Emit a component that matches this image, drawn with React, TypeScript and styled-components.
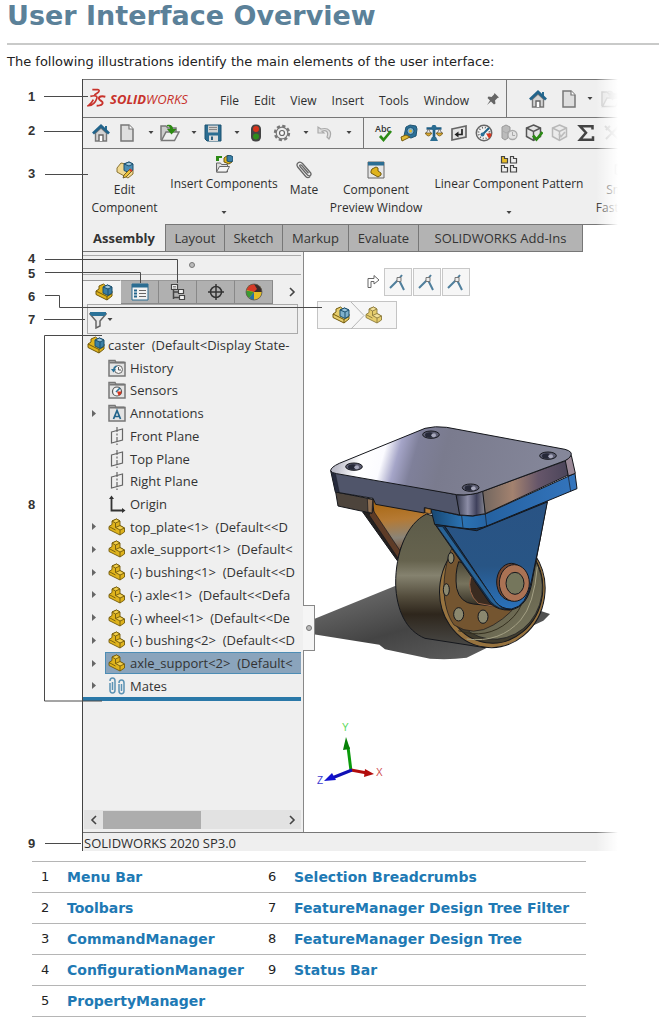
import React from "react";
import styled, { createGlobalStyle } from "styled-components";

const GlobalStyle = createGlobalStyle`
  *, *::before, *::after { box-sizing: border-box; }
  body { margin: 0; background: #fff; color: #222; font: 13px/18px "DejaVu Sans", Verdana, sans-serif; }
  button, input { font: inherit; color: inherit; border: 0; padding: 0; margin: 0; background: none; }
  svg { display: block; flex: none; }
`;

const uiFont = `"Open Sans", "Noto Sans", "Segoe UI", sans-serif`;
const chrome = "#efefef";
const line = "#777";

const Page = styled.main`
  padding: 1px 0 6px;
`;
const Title = styled.h1`
  margin: 0 0 12px 7px;
  font-size: 27px;
  line-height: 30px;
  font-weight: bold;
  color: #5b8199;
`;
const Rule = styled.hr`
  margin: 0 0 8px 7px;
  border: 0;
  height: 2px;
  background: #c9cac9;
`;
const Intro = styled.p`
  margin: 0 0 8px 7px;
`;

const Figure = styled.figure`
  position: relative;
  margin: 0 41px 10px 0;
  padding-left: 82px;
`;
const Callouts = styled.div`
  position: absolute;
  inset: 0;
  pointer-events: none;
`;
const Callout = styled.span<{ $y: number }>`
  position: absolute;
  left: 28px;
  top: ${(p) => p.$y}px;
  font: bold 13px/16px "Liberation Sans", Arial, sans-serif;
  color: #333;
`;

const Window = styled.section`
  position: relative;
  overflow: hidden;
  border-left: 1px solid #444;
  font: 12px/18px ${uiFont};
  color: #2e2e2e;
  &::after {
    content: "";
    position: absolute;
    inset: 0 0 0 auto;
    width: 22px;
    background: linear-gradient(90deg, rgba(255, 255, 255, 0), #fff);
    pointer-events: none;
  }
`;
const MenuBar = styled.header`
  display: flex;
  align-items: center;
  height: 39px;
  background: ${chrome};
  border-top: 1px solid ${line};
  border-bottom: 1px solid ${line};
  padding-left: 4px;
`;
const Menus = styled.nav`
  display: flex;
  gap: 15px;
  margin-left: 31px;
  padding-top: 4px;
`;
const MenuItem = styled.button`
  white-space: nowrap;
`;
const PinButton = styled.button`
  margin: 0 6px 0 17px;
`;
const QuickAccess = styled.div`
  display: flex;
  align-items: center;
  align-self: stretch;
  padding-left: 18px;
  border-left: 1px solid ${line};
`;
const Toolbar = styled.div`
  display: flex;
  align-items: center;
  height: 31px;
  background: ${chrome};
  border-bottom: 1px solid ${line};
`;
const ToolGroup = styled.div<{ $divided?: boolean }>`
  display: flex;
  align-items: center;
  align-self: stretch;
  padding: ${(p) => (p.$divided ? "0 0 0 7px" : "0 8px 0 5px")};
  border-left: ${(p) => (p.$divided ? `1px solid ${line}` : "0")};
`;
const ToolButton = styled.button<{ $w?: number }>`
  display: flex;
  flex: none;
  align-items: center;
  justify-content: center;
  width: ${(p) => p.$w ?? 26}px;
  height: 26px;
`;
const DropButton = styled.button`
  display: flex;
  flex: none;
  align-items: center;
  justify-content: flex-end;
  width: 17px;
  height: 26px;
  padding-right: 3px;
`;
const Ribbon = styled.div`
  display: flex;
  align-items: flex-start;
  height: 75px;
  background: ${chrome};
  text-align: center;
`;
const Command = styled.button<{ $w: number; $high?: boolean }>`
  display: flex;
  flex: none;
  flex-direction: column;
  align-items: center;
  width: ${(p) => p.$w}px;
  padding-top: ${(p) => (p.$high ? 6 : 12)}px;
  white-space: pre-line;
  & > svg:first-child { margin-bottom: 2px; }
  & > span + svg { margin-top: 18px; }
`;
const Tabs = styled.div`
  display: flex;
  height: 28px;
  border-top: 1px solid ${line};
`;
const Tab = styled.button<{ $w: number; $active?: boolean }>`
  flex: none;
  width: ${(p) => p.$w}px;
  font-size: 13px;
  font-weight: ${(p) => (p.$active ? 700 : 400)};
  background: ${(p) => (p.$active ? chrome : "#b3b3b3")};
  border-right: 1px solid ${line};
  border-bottom: 1px solid ${line};
  margin-top: ${(p) => (p.$active ? "-1px" : "0")};
  color: #333;
`;
const Workspace = styled.div`
  display: flex;
  min-height: 580px;
`;
const Panel = styled.aside`
  position: relative;
  display: flex;
  flex: none;
  flex-direction: column;
  width: 221px;
  background: ${chrome};
  border-right: 1px solid #888;
`;
const Grip = styled.div`
  display: flex;
  align-items: center;
  justify-content: center;
  height: 20px;
  margin: 3px 2px 5px 0;
  border-top: 1px solid #aaa;
  border-bottom: 1px solid #aaa;
`;
const GripDot = styled.i`
  width: 6px;
  height: 6px;
  border: 1px solid #777;
  border-radius: 50%;
  background: #bbb;
`;
const ManagerTabs = styled.div`
  display: flex;
  height: 24px;
  margin-right: 2px;
`;
const ManagerTab = styled.button<{ $active?: boolean }>`
  display: flex;
  align-items: center;
  justify-content: center;
  width: 38px;
  padding-left: ${(p) => (p.$active ? 4 : 0)}px;
  background: ${(p) => (p.$active ? "#f4f4f4" : "#b0b0b0")};
  border: 1px solid ${(p) => (p.$active ? "#f4f4f4" : "#888")};
  border-left-width: 0;
  border-top-color: #999;
`;
const MoreButton = styled.button`
  display: flex;
  flex: 1;
  align-items: center;
  justify-content: center;
  padding-left: 10px;
`;
const Filter = styled.label`
  display: flex;
  align-items: center;
  height: 30px;
  margin: 0 5px 0 4px;
  padding: 2px 0 0 1px;
  border: 1px solid #aaa;
`;
const FilterInput = styled.input`
  flex: 1;
  min-width: 0;
  outline: none;
`;
const Tree = styled.ul`
  display: flex;
  flex-direction: column;
  justify-content: space-between;
  height: 363px;
  margin: 0 2px 0 0;
  padding: 0;
  list-style: none;
  font-size: 13px;
  line-height: 22px;
  overflow: hidden;
  color: #333;
`;
const TreeRoot = styled.li`
  display: flex;
  align-items: center;
  gap: 3px;
  padding-left: 4px;
  white-space: pre;
`;
const TreeItem = styled.li`
  display: flex;
  align-items: center;
  height: 22px;
  white-space: pre;
`;
const Twisty = styled.span`
  display: flex;
  flex: none;
  width: 22px;
  padding-left: 9px;
`;
const NodeLabel = styled.span<{ $selected?: boolean }>`
  display: flex;
  flex: 1;
  align-items: center;
  gap: 4px;
  height: 22px;
  padding-left: 2px;
  overflow: hidden;
  border: 1px solid ${(p) => (p.$selected ? "#4d8db5" : "transparent")};
  border-right: 0;
  background: ${(p) => (p.$selected ? "#8aa4bc" : "none")};
`;
const Rollback = styled.div`
  height: 4px;
  margin-right: 2px;
  background: #2a78a8;
`;
const HScroll = styled.div`
  display: flex;
  align-items: center;
  height: 19px;
  margin: auto 2px 3px 1px;
  background: #e2e2e2;
`;
const ScrollArrow = styled.button`
  display: flex;
  align-items: center;
  justify-content: center;
  width: 19px;
  height: 19px;
`;
const ScrollTrack = styled.div`
  flex: 1;
  height: 18px;
`;
const ScrollThumb = styled.div`
  width: 55%;
  height: 100%;
  background: #adadad;
`;
const CollapseHandle = styled.button`
  position: absolute;
  right: -12px;
  top: 353px;
  display: flex;
  align-items: center;
  justify-content: center;
  width: 12px;
  height: 46px;
  background: #f5f5f5;
  border: 1px solid #888;
  border-left: 0;
`;
const Viewport = styled.div`
  flex: 1;
  min-width: 0;
  padding-top: 16px;
  background: #fff;
`;
const ContextBar = styled.div`
  display: flex;
  align-items: center;
  gap: 1px;
  margin: 0 0 5px 63px;
`;
const ContextButton = styled.button`
  display: flex;
  align-items: center;
  justify-content: center;
  width: 28px;
  height: 28px;
  border: 1px solid #c8c8c8;
  background: #f6f6f6;
  svg + & { margin-left: 3px; }
`;
const Breadcrumbs = styled.nav`
  display: flex;
  align-items: center;
  width: 80px;
  height: 28px;
  margin: 0 0 81px 13px;
  padding-left: 14px;
  border: 1px solid #c4c4c4;
  background: #f6f6f6;
`;
const Crumb = styled.button`
  display: flex;
`;
const StatusBar = styled.footer`
  padding: 1px 0 0 1px;
  background: ${chrome};
  border-top: 1px solid ${line};
  font-size: 13px;
  line-height: 18px;
  margin-bottom: -1px;
`;

const Legend = styled.table`
  width: calc(100% - 105px);
  max-width: 554px;
  margin-left: 32px;
  border-collapse: collapse;
  border-top: 1px solid #b5b5b5;
`;
const LegendRow = styled.tr`
  height: 31px;
  border-bottom: 1px solid #b5b5b5;
`;
const LegendNumber = styled.td`
  width: 35px;
  padding: 0 0 0 9px;
`;
const LegendCell = styled.td<{ $w?: number }>`
  width: ${(p) => (p.$w ? `${p.$w}px` : "auto")};
  padding: 0;
  white-space: nowrap;
`;
const LegendLink = styled.a`
  font-size: 14px;
  font-weight: bold;
  color: #2079b4;
  text-decoration: none;
`;

type IconProps = { size?: number; faded?: boolean };
const Svg = ({ size = 18, faded, children, w }: IconProps & { children: React.ReactNode; w?: number }) => (
  <svg width={w ?? size} height={size} viewBox={`0 0 ${w ?? 18} 18`} fill="none" opacity={faded ? 0.35 : 1} aria-hidden="true">
    {children}
  </svg>
);

const Caret = () => (
  <svg width="6" height="4" viewBox="0 0 6 4" aria-hidden="true"><path d="M.5 0h5L3 3z" fill="#444" /></svg>
);
const HomeIcon = () => (
  <Svg>
    <path d="M3.500 9v8h11V9L9 4z" fill="#d4d4d4" stroke="#777" strokeWidth="1.400" />
    <path d="M7 17v-6h4v6" fill="#fff" stroke="#666" strokeWidth="1.400" />
    <path d="M13 2h2v5h-2z" fill="#2b6d92" />
    <path d="M1 9.500 9 2l8 7.500" stroke="#22648b" strokeWidth="2.800" />
  </Svg>
);
const DocIcon = () => (
  <Svg>
    <path d="M3 1h8l4 4v12H3z" fill="#dedede" stroke="#777" strokeWidth="1.500" />
    <path d="M11 1v4h4" fill="#fff" stroke="#777" strokeWidth="1.200" />
  </Svg>
);
const OpenIcon = ({ faded }: IconProps) => (
  <Svg size={18} w={20} faded={faded}>
    <path d="M1 16V2h5l2 2h8v5" fill="#ccc" stroke="#777" strokeWidth="1.500" />
    <path d="M1.500 16.500 6 8h13l-4.500 8.500z" fill="#eee" stroke="#777" strokeWidth="1.500" />
    <path d="M7 1c4-1 6 1 6 4h3.500l-5 5.500L7 5h3c0-2-1-3-3-2.500z" fill={faded ? "#999" : "#2c8a12"} />
  </Svg>
);
const SaveIcon = () => (
  <Svg>
    <path d="M1 1h16v16H3l-2-2z" fill="#2b6d92" stroke="#1d5271" />
    <path d="M4 1.500h10v7H4z" fill="#cfcfcf" />
    <path d="M5 3.500h8M5 5.500h8" stroke="#888" />
    <path d="M5 11.500h9V17H5z" fill="#ddd" />
    <path d="M7 12.500h2V16H7z" fill="#2b5f80" />
  </Svg>
);
const TrafficIcon = () => (
  <Svg>
    <rect x="4" y="0.500" width="10" height="17" rx="4.500" fill="#444" />
    <circle cx="9" cy="5" r="3" fill="#d8341c" />
    <circle cx="9" cy="12.500" r="3" fill="#2f8d1c" />
  </Svg>
);
const GearIcon = () => (
  <Svg>
    <circle cx="9" cy="9" r="7" stroke="#777" strokeWidth="2.400" strokeDasharray="3.200 2.300" />
    <circle cx="9" cy="9" r="5.800" fill="#eee" stroke="#777" strokeWidth="1.200" />
    <circle cx="9" cy="9" r="2.500" fill="#fafafa" stroke="#666" strokeWidth="1.200" />
  </Svg>
);
const UndoIcon = () => (
  <Svg>
    <path d="M2 3v6h6L6 7.200c4-1.500 7 .3 5 5.800l2 2c4-7 0-12-8-10z" fill="#e0e0e0" stroke="#aaa" strokeWidth="1.200" />
  </Svg>
);
const SpellIcon = () => (
  <svg width="20" height="20" viewBox="0 0 20 20" fill="none" aria-hidden="true">
    <text x="1" y="9" fontSize="9" fontWeight="600" fontFamily="Open Sans, sans-serif" fill="#333">Abc</text>
    <path d="m6 13 3.500 4L17 8" stroke="#2b8a14" strokeWidth="2.700" />
  </svg>
);
const TapeIcon = () => (
  <Svg>
    <path d="M6 3 10 1l6 1 1 3-1 7-5 2-7-2z" fill="#2c7199" stroke="#1f5371" />
    <circle cx="10.500" cy="7" r="3.600" fill="#7fb0cb" stroke="#1f5371" />
    <circle cx="10.500" cy="7" r="1.500" fill="#e2bb32" />
    <path d="m1 13 5-2 4 2-8 4z" fill="#e2bb32" stroke="#775d10" />
  </Svg>
);
const ScaleIcon = () => (
  <Svg>
    <path d="M9 1v13M1.500 4.500h15" stroke="#1f5f86" strokeWidth="2.700" />
    <circle cx="9" cy="3.500" r="2.500" fill="#2b6d92" />
    <path d="M5 17h8l-2-4H7z" fill="#2b6d92" />
    <path d="M3.500 5 1 9.500M3.500 5 6 9.500M14.500 5 12 9.500M14.500 5 17 9.500" stroke="#777" />
    <path d="M0 9h7q-3.500 6-7 0zM11 9h7q-3.500 6-7 0z" fill="#d8a62d" stroke="#6b5214" strokeWidth=".7" />
  </Svg>
);
const SectionIcon = () => (
  <Svg>
    <path d="m2 5 14-3v11L2 16z" fill="#e3e3e3" stroke="#666" strokeWidth="1.700" />
    <path d="M12 5v5.500H7" stroke="#222" strokeWidth="1.700" />
    <path d="M8.500 7.500v6l-4-3z" fill="#222" />
  </Svg>
);
const GaugeIcon = () => (
  <Svg>
    <circle cx="9" cy="9" r="7.700" fill="#f3f3f3" stroke="#666" strokeWidth="1.500" />
    <circle cx="9" cy="9" r="5.500" stroke="#666" strokeWidth="1.700" strokeDasharray="1 1.900" />
    <path d="m8 10 6-6" stroke="#1f6288" strokeWidth="2" />
    <circle cx="7.500" cy="10.500" r="2" fill="#2c7199" />
    <path d="M11 9.500h5.500c0 3-1.500 4-2.500 5z" fill="#d8351e" />
  </Svg>
);
const CompareIcon = () => (
  <Svg>
    <path d="M2 3 6 1l4 2v4L8 8v6l-3 2-3-2z" fill="#bbb" stroke="#999" />
    <circle cx="12.500" cy="11" r="4.500" fill="#e3e3e3" stroke="#aaa" strokeWidth="1.300" />
    <path d="M12.500 8v3.500H15M3 7l3 2 2-1" stroke="#aaa" />
  </Svg>
);
const CubeCheckIcon = ({ faded }: IconProps) => (
  <Svg faded={faded}>
    <path d="m8.500 1 7 3v8.500l-7 4-7-4V4z" fill="#e4e4e4" stroke="#555" strokeWidth="1.500" />
    <path d="m1.500 4 7 3.500 7-3.500M8.500 7.500v9" stroke="#555" strokeWidth="1.400" />
    {faded
      ? <path d="m8 10 2 2.500L14 8" stroke="#666" strokeWidth="1.800" />
      : <path d="m8 11.500 3.500 4 6-7.500" stroke="#2b8a14" strokeWidth="2.700" />}
  </Svg>
);
const SigmaIcon = () => (
  <Svg><path d="M15.500 5.500V2.200H3l6 6.500-6 7h13v-3.500" stroke="#444" strokeWidth="2.500" /></Svg>
);
const CrossIcon = () => (
  <Svg faded><path d="m2 2 13 13M15 3 3 15M3 6l4-4" stroke="#777" strokeWidth="2" /></Svg>
);
const PinIcon = () => (
  <svg width="14" height="14" viewBox="0 0 14 14" aria-hidden="true">
    <path d="M8.500 1 13 5.500l-1.500.5-2.500 2.500.5 3-1.500 1L5 9.500 1 13l3-4.500L1.500 6l1-1.500 3 .5L8 2.500z" fill="#666" />
  </svg>
);
const PartIcon = ({ faded }: IconProps) => {
  const edge = faded ? "#8b7a3c" : "#725a0c";
  return (
    <Svg>
      <g stroke={edge} strokeWidth=".9" strokeLinejoin="round">
        <path d="M1 8.500 4 6.500V3L8.500 1 12 3v4.500l4.500 2.500v4L12 17 1 11.500z" fill={faded ? "#e6cd6c" : "#dfb31c"} />
        <path d="m4 3 3.500 2L12 3 8.500 1z" fill={faded ? "#f3e19a" : "#f2cf4a"} />
        <path d="m7.500 9.500 4.500 2.500 4.500-2L12 7.500z" fill={faded ? "#f3e19a" : "#f2cf4a"} />
        <path d="M7.500 5v4.500M12 12v5M1 8.500l6.500 3.500" fill="none" />
      </g>
    </Svg>
  );
};
const AssemblyIcon = ({ faded }: IconProps) => (
  <Svg>
    <g strokeLinejoin="round">
      <path d="M1 8 4 6V3l4.500-2L11 3v6l6-1v5l-5 4L1 11.500z" fill={faded ? "#e6cd6c" : "#dfb31c"} stroke="#725a0c" />
      <path d="m1 8 11 5.500V17M12 13.500l5-3" stroke="#725a0c" />
      <path d="m8 4 4.500-2L17 4v6l-4 2.500L8 10z" fill={faded ? "#7fb0cb" : "#3b7fa6"} stroke="#1c506f" />
      <path d="m8 4 5 2 4-2-4.500-2z" fill="#9bc4da" stroke="#1c506f" />
      <path d="M13 6v6" stroke="#1c506f" />
    </g>
  </Svg>
);
const EditComponentIcon = () => (
  <Svg>
    <g strokeLinejoin="round">
      <path d="m1 7 4-5 5 1v7l7-1v4l-5 4L1 11z" fill="#f0d890" stroke="#8a7434" />
      <path d="m8 3 5-2 4 2v6l-4 2.500L8 9.500z" fill="#4b8db3" stroke="#1c506f" />
      <path d="m8 3 5 2 4-2-4-2z" fill="#9bc4da" stroke="#1c506f" />
      <path d="m7 17 1-3 6-6 2 2-6 6z" fill="#ecc23a" stroke="#5a4a1a" strokeWidth=".8" />
      <path d="m13 9 1.500-1.500 2 2L15 11z" fill="#d33a26" />
    </g>
  </Svg>
);
const InsertIcon = () => (
  <Svg>
    <path d="M1.500 17V8h4l1 1.500h6V17z" fill="#ddd" stroke="#666" />
    <path d="m1.500 17 3-5.500h10l-3 5.500z" fill="#f4f4f4" stroke="#666" />
    <path d="M1 6V1h6v2H4v3z" fill="#2b8a14" />
    <path d="m9 3 4-3 4 2v5l-3 2-5-2z" fill="#dfb31c" stroke="#725a0c" />
    <path d="m12 1 3-1 3 2v4l-3 1-3-1z" fill="#3b7fa6" stroke="#1c506f" />
  </Svg>
);
const ClipIcon = () => (
  <Svg>
    <path d="M5 5.500 12.500 14c2 2 4.500 0 3-2.300L7.500 2.500C4.500-.5.500 2.500 2.700 6l8 9.500c1.500 1.500 3.500 1.500 4.500 0M5 5.500C4 4 5.500 3.300 6.500 4.300l7 8" stroke="#666" strokeWidth="1.300" />
  </Svg>
);
const PreviewIcon = () => (
  <Svg>
    <path d="M1 1h16v16H1z" fill="#e6e6e6" stroke="#666" />
    <path d="M1 1h16v3.500H1z" fill="#2b6d92" />
    <path d="m5 8 4-2 2 1v3l3 2v2l-3 2-7-4v-2z" fill="#dfb31c" stroke="#725a0c" />
  </Svg>
);
const PatternIcon = () => (
  <Svg>
    {[[1, 1], [10, 1], [1, 10], [10, 10]].map(([x, y], i) => (
      <path key={i} transform={`translate(${x} ${y})`} d="M.5.500h3v2h3v4.500h-6z" fill={i === 0 ? "#e8bd2a" : "#eee"} stroke="#444" strokeWidth="1.200" />
    ))}
  </Svg>
);
const ListIcon = () => (
  <Svg>
    <path d="M1 1h16v16H1z" fill="#f2f2f2" stroke="#2b6d92" />
    <path d="M1 1h16v3.500H1z" fill="#2b6d92" />
    <path d="M3 7.500h3M3 10.500h3M3 13.500h3" stroke="#22648b" strokeWidth="2" />
    <path d="M8 7.500h7M8 10.500h7M8 13.500h7" stroke="#666" />
  </Svg>
);
const ConfigIcon = () => (
  <Svg>
    <path d="M4.500 6v10M4.500 9H10M4.500 14.500H10" stroke="#444" strokeWidth="1.500" />
    <path d="M2.500 1.500h6v5h-6zM9.500 6.500h5v4h-5zM10.500 12.500h5v4h-5z" fill="#f2f2f2" stroke="#444" strokeWidth="1.200" />
    <path d="M4 3.500h3M4 5h3" stroke="#888" />
  </Svg>
);
const TargetIcon = () => (
  <Svg><circle cx="9" cy="9" r="5.500" stroke="#333" strokeWidth="1.500" /><path d="M9 1v16M1 9h16" stroke="#333" strokeWidth="1.500" /></Svg>
);
const AppearanceIcon = () => (
  <Svg>
    <circle cx="9" cy="9" r="8" fill="#e4bd25" />
    <path d="M9 9V1a8 8 0 0 1 8 8z" fill="#3a2b2b" />
    <path d="M1.500 7A8 8 0 0 1 9 1l3 5-3 3z" fill="#d43a27" />
    <path d="M1.200 7.500 9 9l-5 6a8 8 0 0 1-2.800-7.500z" fill="#3b9a31" />
    <path d="m9 9-5 6a8 8 0 0 0 5 2z" fill="#2670a3" />
    <circle cx="9" cy="9" r="8" stroke="#555" strokeWidth=".8" />
  </Svg>
);
const FunnelIcon = () => (
  <Svg>
    <path d="M1 3 7 10v7l4-2v-5l6-7z" fill="#e8e8e8" stroke="#666" strokeWidth="1.500" />
    <path d="M1 1h16v2.500l-2 1.500H3L1 3.500z" fill="#2b7298" />
  </Svg>
);
const FolderIcon = ({ kind }: { kind: "history" | "sensors" | "annotations" }) => (
  <Svg>
    <path d="M1 17V1.500h6l1 2h9V17z" fill="#e4e4e4" stroke="#777" strokeWidth="1.500" />
    <path d="M1.500 3.500h15" stroke="#777" strokeWidth="2" />
    {kind === "history" && <><circle cx="10.500" cy="10.500" r="4" stroke="#666" fill="#f5f5f5" /><path d="M10.500 8v3H13" stroke="#555" /><path d="M3 10h5l-2.500 3.500z" fill="#2b7298" /><path d="M5.500 11a5 5 0 0 1 3-4" stroke="#2b7298" strokeWidth="1.500" /></>}
    {kind === "sensors" && <><circle cx="9" cy="10.500" r="4.500" stroke="#555" strokeWidth="1.200" fill="#f5f5f5" /><path d="m8 11 4-4" stroke="#2b7298" strokeWidth="1.600" /><path d="M9 10.500h4.500a4 4 0 0 1-3 4z" fill="#d8351e" /></>}
    {kind === "annotations" && <path d="m5.500 15 3.500-8.500 3.500 8.500M7 12.500h4.500" stroke="#22648b" strokeWidth="1.700" />}
  </Svg>
);
const PlaneIcon = () => (
  <Svg>
    <path d="m3.500 5 11-3v11l-11 3z" stroke="#666" strokeWidth="1.200" />
    <path d="M9 0v18" stroke="#666" strokeDasharray="5 1.500 2 1.500" strokeWidth="1.200" />
  </Svg>
);
const OriginIcon = () => (
  <Svg>
    <path d="M3.500 3v12.500H15" stroke="#333" strokeWidth="1.800" />
    <path d="m1 4 2.500-3.500L6 4zM14 13l3.500 2.500L14 18z" fill="#333" />
  </Svg>
);
const MatesIcon = () => (
  <Svg>
    <path d="M2 6v7c0 4 5 4 5 0V4c0-4-5-4-5 0M4.500 5v8M11 7v7c0 3.500 5 3.500 5 0V6c0-4-5-4-5 0M13.500 7v7" stroke="#5c93b4" strokeWidth="1.500" />
  </Svg>
);
const MateSmallIcon = () => (
  <Svg>
    <path d="m1 15 8-8 4-5M10 7l5 10" stroke="#4f7f9c" strokeWidth="2" />
    <path d="M8 4.500h4v4H8z" fill="#eee" stroke="#777" />
  </Svg>
);
const RedirectIcon = () => (
  <svg width="13" height="14" viewBox="0 0 13 14" fill="#fff" stroke="#666" aria-hidden="true">
    <path d="M1 12.500v-9h6v-3L12 5 7 9V6.500H4v6z" />
  </svg>
);
const ChevronIcon = ({ left }: { left?: boolean }) => (
  <svg width="8" height="10" viewBox="0 0 8 10" fill="none" aria-hidden="true">
    <path d={left ? "M6 1 2 5l4 4" : "m2 1 4 4-4 4"} stroke="#444" strokeWidth="1.600" />
  </svg>
);
const TwistyIcon = () => (
  <svg width="5" height="7" viewBox="0 0 5 7" aria-hidden="true"><path d="M0 0v7l4-3.500z" fill="#666" /></svg>
);

const LogoBox = styled.div`
  display: flex;
  flex: none;
  align-items: center;
  gap: 4px;
  width: 102px;
  color: #c8322b;
  font: italic 13px/18px "Open Sans", sans-serif;
  white-space: nowrap;
  padding-bottom: 2px;
`;
const LogoWord = styled.span`
  padding-top: 2px;
`;
const Logo = () => (
  <LogoBox>
    <svg width="19" height="20" viewBox="0 0 57 60" fill="none" stroke="#c8322b" strokeWidth="5" aria-hidden="true">
      <path d="M16 5h16c7 0 5 6-1 10l-9 6" />
      <path d="M10 25c14-4 23-1 19 7-4 12-13 20-25 21 7-5 12-11 15-18" />
      <path d="M55 26c-12-3-20 0-19 6 0 5 12 7 11 13-1 8-9 8-18 8" strokeWidth="6" />
    </svg>
    <LogoWord><b>SOLID</b>WORKS</LogoWord>
  </LogoBox>
);

const CasterSvg = styled.svg`
  margin-left: 6px;
  overflow: visible;
`;
const Caster = () => (
  <CasterSvg width="300" height="260" viewBox="0 0 900 780" role="img" aria-label="Caster assembly model" stroke="#15171c" strokeWidth="3" strokeLinejoin="round">
    <defs>
      <linearGradient id="top" x1="0" y1="0" x2="1" y2="0.080">
        <stop offset="0" stopColor="#9a9bab" /><stop offset=".08" stopColor="#c4c4cf" /><stop offset=".16" stopColor="#fff" />
        <stop offset=".25" stopColor="#fbfbff" /><stop offset=".31" stopColor="#a5a5c8" /><stop offset=".38" stopColor="#7f809a" /><stop offset=".5" stopColor="#7a7b8e" /><stop offset="1" stopColor="#85879a" />
      </linearGradient>
      <linearGradient id="right"><stop offset="0" stopColor="#71665f" /><stop offset=".35" stopColor="#a3826f" /><stop offset=".65" stopColor="#66566a" /><stop offset="1" stopColor="#4b455a" /></linearGradient>
      <linearGradient id="corner"><stop offset="0" stopColor="#34384c" /><stop offset=".4" stopColor="#8c8da6" /><stop offset=".7" stopColor="#3f415c" /><stop offset="1" stopColor="#8a8a94" /></linearGradient>
      <linearGradient id="tread" x1="0" y1="0" x2="0" y2="1"><stop offset="0" stopColor="#5c5b49" /><stop offset=".35" stopColor="#66634e" /><stop offset=".46" stopColor="#85826f" /><stop offset=".62" stopColor="#534c3c" /><stop offset=".75" stopColor="#2e261c" /><stop offset="1" stopColor="#4a4a48" /></linearGradient>
      <linearGradient id="orange" x1="0.300" y1="0" x2="0.400" y2="1"><stop offset="0" stopColor="#a8660f" /><stop offset=".4" stopColor="#b57a34" /><stop offset=".75" stopColor="#8a8478" /><stop offset="1" stopColor="#755238" /></linearGradient>
      <linearGradient id="shade" x1="0" y1="0" x2="1" y2="1"><stop offset="0" stopColor="#777" /><stop offset=".5" stopColor="#444" /><stop offset="1" stopColor="#666" /></linearGradient>
      <linearGradient id="blue" x1="0" y1="0" x2="0" y2="1"><stop offset="0" stopColor="#295384" /><stop offset=".6" stopColor="#285585" /><stop offset="1" stopColor="#2a72bb" /></linearGradient>
      <linearGradient id="band"><stop offset="0" stopColor="#17466f" /><stop offset=".22" stopColor="#2b73b4" /><stop offset=".4" stopColor="#2562a2" /><stop offset="1" stopColor="#3475bd" /></linearGradient>
      <linearGradient id="inner" x1="0" y1="0" x2="1" y2="1"><stop offset="0" stopColor="#45402f" /><stop offset="1" stopColor="#7b7960" /></linearGradient>
      <linearGradient id="hub" x1="0" y1="0" x2="0" y2="1"><stop offset="0" stopColor="#4a4636" /><stop offset=".5" stopColor="#77735d" /><stop offset="1" stopColor="#332d22" /></linearGradient>
    </defs>
    <path d="M-18 640 5 630 255 528 640 560 690 602 720 612 700 632 640 660 470 743Q420 750 360 746L225 718 208 704-18 668Z" fill="url(#shade)" stroke="none" />
    <path d="M158 306 262 452 275 412 190 296Z" fill="#25211f" />
    <path d="M188 266 360 296 350 318Q292 360 268 424L192 312Z" fill="url(#orange)" />
    <path d="m182 290 88 132-6 22-86-128Z" fill="#5e3c27" strokeWidth="2" />
    <path d="m77 246 112 22-3 42-102-22Z" fill="#4d443c" />
    <path d="m172 266 16 3-2 40-12-3Z" fill="#8f7052" strokeWidth="2" />
    <path d="M350 312C290 340 256 430 257 522 259 600 288 662 345 685L525 713 600 500 440 340Z" fill="url(#tread)" />
    <ellipse cx="547" cy="540" rx="158" ry="173" fill="#97733f" transform="rotate(8 547 540)" />
    <ellipse cx="551" cy="538" rx="147" ry="162" fill="#413c2d" transform="rotate(8 551 538)" />
    <ellipse cx="555" cy="535" rx="142" ry="153" fill="url(#inner)" strokeWidth="2" transform="rotate(8 555 535)" />
    <path d="M423 420C395 490 392 590 432 645Q490 682 550 645 610 610 634 560L520 410 440 400Z" fill="#745530" strokeWidth="2" />
    <path d="M445 662Q530 690 595 635 632 605 642 560" fill="none" stroke="#35301f" strokeWidth="3" />
    <path d="M470 687Q570 700 632 630 672 585 682 470" fill="none" stroke="#a5a185" strokeWidth="3" />
    <path d="M446 455Q434 490 440 535 450 578 490 582L548 588 520 480Z" fill="url(#hub)" />
    <path d="M482 500Q470 550 505 580L548 588 540 560Z" fill="#3a2b20" stroke="#9a6548" />
    <g fill="#8b886f" strokeWidth="3">
      <ellipse cx="446" cy="613" rx="15" ry="20" /><ellipse cx="519" cy="620" rx="15" ry="20" />
      <ellipse cx="409" cy="539" rx="9" ry="18" /><ellipse cx="423" cy="444" rx="9" ry="16" />
    </g>
    <path d="M373 340 455 350 712 272 690 390 667 510Q655 592 600 600 565 602 540 580Z" fill="#123254" />
    <path d="M404 348 500 362 712 276 690 390 665 510Q650 590 605 597 575 598 556 575Z" fill="url(#blue)" />
    <path d="m381 349 17 1 160 227q18 23 42 22-34 2-58-24Z" fill="#286397" strokeWidth="2" />
    <path d="M362 296 448 316Q490 322 526 312L795 190 801 236 540 344Q500 362 456 354L374 343Z" fill="url(#band)" />
    <path d="m526 312 4 36M455 317l4 36M775 200l7 44" fill="none" strokeWidth="2" />
    <path d="M62 182 440 254 450 315 343 293V309L197 283 189 265 76 246Z" fill="#50556a" />
    <path d="m64 186 12 2 12 58-12-2z" fill="#252a3c" strokeWidth="1" />
    <path d="m345 294 18 4v14l-18-4Z" fill="#b57b33" strokeWidth="2" />
    <path d="M438 254Q485 258 520 243L526 311Q490 322 449 315Z" fill="url(#corner)" />
    <path d="M518 244 768 152 775 195 526 311Z" fill="url(#right)" />
    <path d="M766 152 784 136 796 190 775 198Z" fill="#9b8997" />
    <path d="M62 182Q62 172 88 160L345 55Q375 47 410 52L765 118Q790 125 782 138 778 146 765 152L520 243Q485 258 440 254L80 191Q65 189 62 182Z" fill="url(#top)" />
    {[[132, 170], [363, 74], [714, 137], [482, 233]].map(([x, y]) => (
      <g key={x}><ellipse cx={x} cy={y} rx="25" ry="11" fill="#5d5e73" /><ellipse cx={x - 4} cy={y + 1} rx="14" ry="8" fill="#262938" stroke="none" /><ellipse cx={x + 8} cy={y + 2} rx="7" ry="6" fill="#a6a7bb" stroke="none" /></g>
    ))}
    <ellipse cx="604" cy="516" rx="44" ry="56" fill="#714631" />
    <ellipse cx="613" cy="519" rx="45" ry="55" fill="#aa7254" />
    <ellipse cx="615" cy="520" rx="27" ry="33" fill="#75765c" />
  </CasterSvg>
);

const TriadSvg = styled.svg`
  margin: 52px 0 0 10px;
`;
const Triad = () => (
  <TriadSvg width="72" height="66" viewBox="314 722 72 66" fontFamily="Liberation Sans, Arial, sans-serif" fontSize="10" role="img" aria-label="Axis triad">
    <path d="m351 771-3-24" stroke="#0a9a0a" strokeWidth="3" />
    <path d="m346 737 4 12-7 1z" fill="#078207" />
    <path d="m351 770 16 3" stroke="#b20d0d" strokeWidth="3" />
    <path d="m374 774-9-5-1 8z" fill="#b20d0d" />
    <path d="m352 770-20 8" stroke="#1010b5" strokeWidth="3" />
    <path d="m324 781 8-8 4 7z" fill="#1010d0" />
    <text x="342" y="731" fill="#5ad95a">Y</text>
    <text x="376" y="776" fill="#d05050">X</text>
    <text x="317" y="784" fill="#3a3ad0">Z</text>
  </TriadSvg>
);

const LeaderLines = () => (
  <svg width="330" height="772" viewBox="0 79 330 772" fill="none" stroke="#4a4a4a" aria-hidden="true">
    <path d="M44 96.500h44M44 131.500h39M45 174.500h43M45 259.500h132.500V283M45 272.500h95.500V283M45 295.500h14.500v12H322M44 319.500h41M102 335.500H44.500v365.500H102M45 843.500h36" />
  </svg>
);
const CrumbDivider = () => (
  <svg width="15" height="27" viewBox="0 0 15 27" fill="none" stroke="#b5b5b5" aria-hidden="true"><path d="m1 0 13 13.500L1 27" /></svg>
);

const callouts: [number, number][] = [[1, 10], [2, 44], [3, 87], [4, 172], [5, 187], [6, 210], [7, 233], [8, 418], [9, 757]];
const menus = ["File", "Edit", "View", "Insert", "Tools", "Window"];
const tabs: [string, number][] = [["Assembly", 83], ["Layout", 59], ["Sketch", 58], ["Markup", 66], ["Evaluate", 70], ["SOLIDWORKS Add-Ins", 164]];
const parts = [
  "top_plate<1>  (Default<<D",
  "axle_support<1>  (Default<",
  "(-) bushing<1>  (Default<<D",
  "(-) axle<1>  (Default<<Defa",
  "(-) wheel<1>  (Default<<De",
  "(-) bushing<2>  (Default<<D",
  "axle_support<2>  (Default<",
];
const nodes: { label: string; icon: React.ReactNode; open?: boolean; selected?: boolean }[] = [
  { label: "History", icon: <FolderIcon kind="history" /> },
  { label: "Sensors", icon: <FolderIcon kind="sensors" /> },
  { label: "Annotations", icon: <FolderIcon kind="annotations" />, open: true },
  { label: "Front Plane", icon: <PlaneIcon /> },
  { label: "Top Plane", icon: <PlaneIcon /> },
  { label: "Right Plane", icon: <PlaneIcon /> },
  { label: "Origin", icon: <OriginIcon /> },
  ...parts.map((label, i) => ({ label, icon: <PartIcon />, open: true, selected: i === parts.length - 1 })),
  { label: "Mates", icon: <MatesIcon />, open: true },
];
const legend = [
  ["Menu Bar", "Selection Breadcrumbs"],
  ["Toolbars", "FeatureManager Design Tree Filter"],
  ["CommandManager", "FeatureManager Design Tree"],
  ["ConfigurationManager", "Status Bar"],
  ["PropertyManager", ""],
];

const Drop = ({ label }: { label: string }) => <DropButton aria-label={`${label} options`}><Caret /></DropButton>;

export default function App() {
  return (
    <Page>
      <GlobalStyle />
      <Title>User Interface Overview</Title>
      <Rule />
      <Intro>The following illustrations identify the main elements of the user interface:</Intro>
      <Figure>
        <Window aria-label="SOLIDWORKS window">
          <MenuBar>
            <Logo />
            <Menus>{menus.map((m) => <MenuItem key={m}>{m}</MenuItem>)}</Menus>
            <PinButton aria-label="Pin menu"><PinIcon /></PinButton>
            <QuickAccess>
              <ToolButton aria-label="Home"><HomeIcon /></ToolButton>
              <ToolButton $w={36} aria-label="New"><DocIcon /></ToolButton>
              <Caret />
              <ToolButton $w={36} aria-label="Open"><OpenIcon faded /></ToolButton>
            </QuickAccess>
          </MenuBar>
          <Toolbar>
            <ToolGroup>
              <ToolButton aria-label="Home"><HomeIcon /></ToolButton>
              <ToolButton aria-label="New"><DocIcon /></ToolButton>
              <Drop label="New" />
              <ToolButton aria-label="Open"><OpenIcon /></ToolButton>
              <Drop label="Open" />
              <ToolButton aria-label="Save"><SaveIcon /></ToolButton>
              <Drop label="Save" />
              <ToolButton aria-label="Rebuild"><TrafficIcon /></ToolButton>
              <ToolButton aria-label="Options"><GearIcon /></ToolButton>
              <Drop label="Settings" />
              <ToolButton aria-label="Undo"><UndoIcon /></ToolButton>
              <Drop label="Undo" />
            </ToolGroup>
            <ToolGroup $divided>
              <ToolButton $w={25} aria-label="Spelling"><SpellIcon /></ToolButton>
              <ToolButton $w={25} aria-label="Measure"><TapeIcon /></ToolButton>
              <ToolButton $w={25} aria-label="Mass properties"><ScaleIcon /></ToolButton>
              <ToolButton $w={25} aria-label="Section properties"><SectionIcon /></ToolButton>
              <ToolButton $w={25} aria-label="Performance"><GaugeIcon /></ToolButton>
              <ToolButton $w={25} aria-label="Compare"><CompareIcon /></ToolButton>
              <ToolButton aria-label="Check"><CubeCheckIcon /></ToolButton>
              <ToolButton aria-label="Verify"><CubeCheckIcon faded /></ToolButton>
              <ToolButton aria-label="Equations"><SigmaIcon /></ToolButton>
              <ToolButton aria-label="Deviation"><CrossIcon /></ToolButton>
            </ToolGroup>
          </Toolbar>
          <Ribbon>
            <Command $w={83}><EditComponentIcon /><span>{"Edit\nComponent"}</span></Command>
            <Command $w={116} $high><InsertIcon /><span>Insert Components</span><Caret /></Command>
            <Command $w={44}><ClipIcon /><span>Mate</span></Command>
            <Command $w={100}><PreviewIcon /><span>{"Component\nPreview Window"}</span></Command>
            <Command $w={166} $high><PatternIcon /><span>Linear Component Pattern</span><Caret /></Command>
            <Command $w={62}><CubeCheckIcon faded /><span>{"Smart\nFasteners"}</span></Command>
          </Ribbon>
          <Tabs role="tablist">
            {tabs.map(([name, w], i) => <Tab key={name} role="tab" aria-selected={i === 0} $w={w} $active={i === 0}>{name}</Tab>)}
          </Tabs>
          <Workspace>
            <Panel>
              <Grip><GripDot /></Grip>
              <ManagerTabs>
                <ManagerTab $active aria-label="FeatureManager"><AssemblyIcon /></ManagerTab>
                <ManagerTab aria-label="PropertyManager"><ListIcon /></ManagerTab>
                <ManagerTab aria-label="ConfigurationManager"><ConfigIcon /></ManagerTab>
                <ManagerTab aria-label="DimXpertManager"><TargetIcon /></ManagerTab>
                <ManagerTab aria-label="DisplayManager"><AppearanceIcon /></ManagerTab>
                <MoreButton aria-label="More tabs"><ChevronIcon /></MoreButton>
              </ManagerTabs>
              <Filter><FunnelIcon /><Caret /><FilterInput aria-label="Filter design tree" /></Filter>
              <Tree>
                <TreeRoot><AssemblyIcon />{"caster  (Default<Display State-"}</TreeRoot>
                {nodes.map((n) => (
                  <TreeItem key={n.label}>
                    <Twisty>{n.open && <TwistyIcon />}</Twisty>
                    <NodeLabel $selected={n.selected}>{n.icon}{n.label}</NodeLabel>
                  </TreeItem>
                ))}
              </Tree>
              <Rollback />
              <HScroll>
                <ScrollArrow aria-label="Scroll left"><ChevronIcon left /></ScrollArrow>
                <ScrollTrack><ScrollThumb /></ScrollTrack>
                <ScrollArrow aria-label="Scroll right"><ChevronIcon /></ScrollArrow>
              </HScroll>
              <CollapseHandle aria-label="Collapse panel"><GripDot /></CollapseHandle>
            </Panel>
            <Viewport>
              <ContextBar>
                <RedirectIcon />
                <ContextButton aria-label="Mate 1"><MateSmallIcon /></ContextButton>
                <ContextButton aria-label="Mate 2"><MateSmallIcon /></ContextButton>
                <ContextButton aria-label="Mate 3"><MateSmallIcon /></ContextButton>
              </ContextBar>
              <Breadcrumbs aria-label="Selection breadcrumbs">
                <Crumb aria-label="Assembly"><AssemblyIcon faded /></Crumb>
                <CrumbDivider />
                <Crumb aria-label="Part"><PartIcon faded /></Crumb>
              </Breadcrumbs>
              <Caster />
              <Triad />
            </Viewport>
          </Workspace>
          <StatusBar>SOLIDWORKS 2020 SP3.0</StatusBar>
        </Window>
        <Callouts>
          <LeaderLines />
          {callouts.map(([n, y]) => <Callout key={n} $y={y}>{n}</Callout>)}
        </Callouts>
      </Figure>
      <Legend>
        <tbody>
          {legend.map(([left, right], i) => (
            <LegendRow key={left}>
              <LegendNumber>{i + 1}</LegendNumber>
              <LegendCell $w={192}><LegendLink href="#">{left}</LegendLink></LegendCell>
              <LegendNumber>{right ? i + 6 : ""}</LegendNumber>
              <LegendCell>{right && <LegendLink href="#">{right}</LegendLink>}</LegendCell>
            </LegendRow>
          ))}
        </tbody>
      </Legend>
    </Page>
  );
}
